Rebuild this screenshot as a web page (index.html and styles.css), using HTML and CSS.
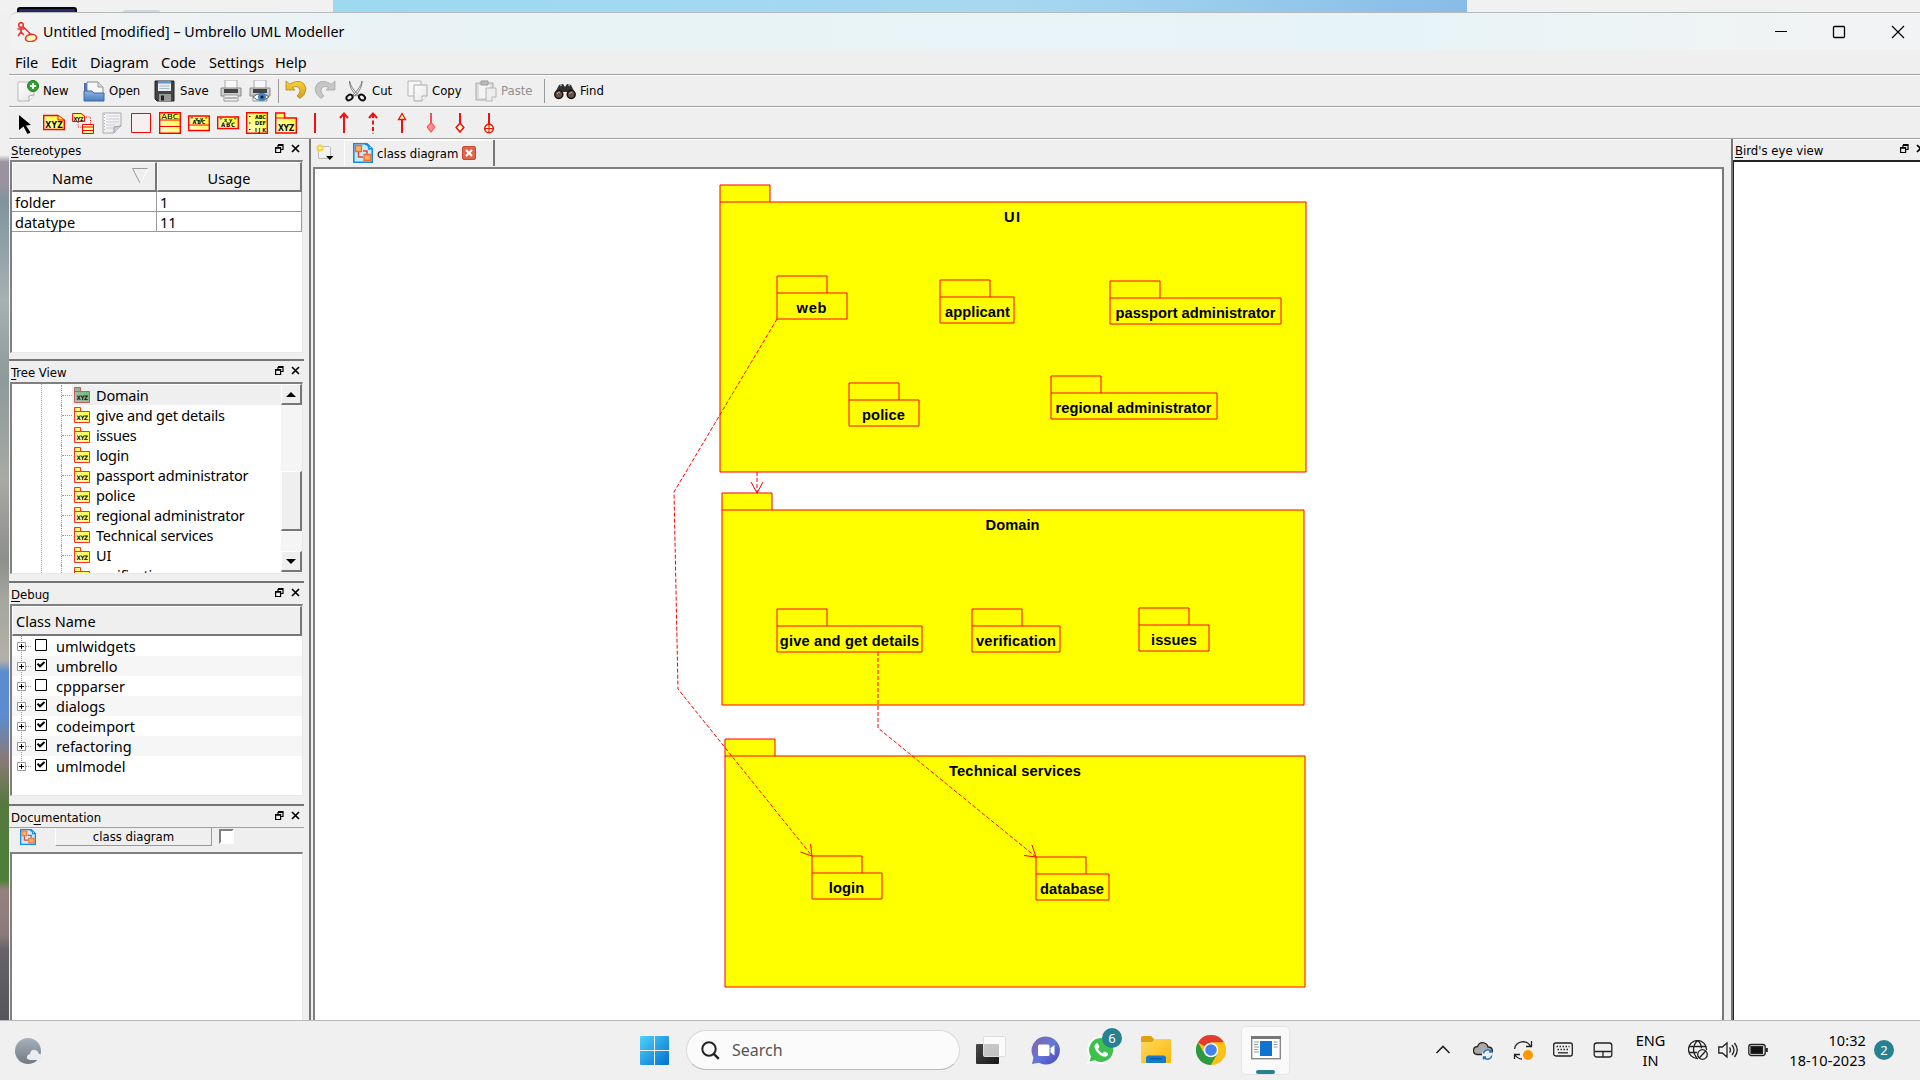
FILE: index.html
```html
<!DOCTYPE html>
<html lang="en">
<head>
<meta charset="utf-8">
<title>Umbrello UML Modeller</title>
<link rel="stylesheet" href="styles.css">
</head>
<body>
<svg width="0" height="0" class="defs" aria-hidden="true">
  <defs>
    <linearGradient id="yel" x1="0" y1="1" x2="1" y2="0"><stop offset="0" stop-color="#ffffe0"/><stop offset="1" stop-color="#ffff10"/></linearGradient>
    <linearGradient id="sel" x1="0" y1="1" x2="1" y2="0"><stop offset="0" stop-color="#a8c4bc"/><stop offset="1" stop-color="#6fb06a"/></linearGradient>
    <linearGradient id="page" x1="0" y1="0" x2="1" y2="1"><stop offset="0" stop-color="#fff"/><stop offset="1" stop-color="#e4e4e4"/></linearGradient>
    <linearGradient id="fold" x1="0" y1="0" x2="0" y2="1"><stop offset="0" stop-color="#8fb4e4"/><stop offset="1" stop-color="#4a7dbd"/></linearGradient>
    <linearGradient id="gold" x1="0" y1="0" x2="0" y2="1"><stop offset="0" stop-color="#f7d43c"/><stop offset="1" stop-color="#d99a1c"/></linearGradient>
    <linearGradient id="win" x1="0" y1="0" x2="1" y2="1"><stop offset="0" stop-color="#4fd2fb"/><stop offset="1" stop-color="#0070d0"/></linearGradient>
    <linearGradient id="chat" x1="0" y1="0" x2="1" y2="1"><stop offset="0" stop-color="#8660a8"/><stop offset=".5" stop-color="#6478d8"/><stop offset="1" stop-color="#4a45b8"/></linearGradient>
    <linearGradient id="fy" x1="0" y1="0" x2="1" y2="1"><stop offset="0" stop-color="#ffd95e"/><stop offset="1" stop-color="#fbb80a"/></linearGradient>
    <linearGradient id="moon" x1="0" y1="0" x2="0" y2="1"><stop offset="0" stop-color="#a5b1bd"/><stop offset="1" stop-color="#737b82"/></linearGradient>
    <linearGradient id="blk" x1="0" y1="0" x2="1" y2="1"><stop offset="0" stop-color="#4a4a4a"/><stop offset="1" stop-color="#161616"/></linearGradient>
    <symbol id="float" viewBox="0 0 9 9"><path d="M3 .5h5v5H6M3 1.5h5M3 1v2" fill="none" stroke="#000" stroke-width="1.2"/><path d="M.6 3.5h5v5h-5zM.6 4.2h5" fill="none" stroke="#000" stroke-width="1.2"/></symbol>
    <symbol id="close" viewBox="0 0 9 9"><path d="M1 1l7 7M8 1L1 8" stroke="#000" stroke-width="1.7"/></symbol>
    <symbol id="pkg" viewBox="0 0 16 16"><path d="M.5 15.500V.5h6v4h9v11z" fill="url(#yel)" stroke="#ff3020"/><path d="M.5 4.500h6" stroke="#ff3020"/><text x="8.200" y="13" text-anchor="middle" class="t6" textLength="11.500">XYZ</text></symbol>
    <symbol id="pkgsel" viewBox="0 0 16 16"><path d="M.5 15.500V.5h6v4h9v11z" fill="url(#sel)" stroke="#cc5a62"/><path d="M.5 4.500h6" stroke="#cc5a62"/><text x="8.200" y="13" text-anchor="middle" class="t6" textLength="11.500">XYZ</text></symbol>
    <symbol id="diag" viewBox="0 0 20 20"><path d="M.8.8H14l5.200 5v13.400H.8z" fill="#c5edff" stroke="#108ce8" stroke-width="1.600"/><path d="M12 1q4 1 4 5l3-.5" fill="#fff" stroke="#108ce8" stroke-width="1.500"/><path d="M2.500 2.500h6v6h-6zM11 11.500h6.500v6H11z" fill="#ffb060" stroke="#f56b30" stroke-width="1.300"/><path d="M5.500 9v5H10M14 11V8h-4" fill="none" stroke="#e0463a" stroke-width="1.500"/></symbol>
    <symbol id="plus" viewBox="0 0 14 9"><path d="M.5.5h8v8h-8z" fill="#fff" stroke="#999"/><path d="M2 4.500h5M4.500 2v5" stroke="#000"/><path d="M9 4.500h5" stroke="#999" stroke-dasharray="1 1"/></symbol>
    <symbol id="off" viewBox="0 0 12 12"><path d="M.5.5h11v11H.5z" fill="#fff" stroke="#000"/></symbol>
    <symbol id="on" viewBox="0 0 12 12"><path d="M.5.5h11v11H.5z" fill="#fff" stroke="#000"/><path d="M2.500 4.800l2.500 2.500L9.500 3" fill="none" stroke="#000" stroke-width="2"/></symbol>
  </defs>
</svg>

<div class="desktop">
  <div class="wall"><i class="chip"></i><i class="pill"></i><i class="sky"></i></div>
  <div class="window">
    <header class="titlebar">
      <svg width="20" height="20" viewBox="0 0 20 20" fill="none" stroke="#f03030" stroke-width="1.600"><circle cx="4" cy="3" r="2.300"/><path d="M4 5.500v4.500M.5 7h7M4 10l-3 4M4 10l3 3M6 4.500l8 8"/><ellipse cx="14" cy="16" rx="5.500" ry="3.600" fill="#ffffb8" transform="rotate(-8 14 16)"/></svg>
      <span class="title">Untitled [modified] – Umbrello UML Modeller</span>
      <svg class="winbtns" width="124" height="14" viewBox="0 0 124 14" fill="none" stroke="#000"><path d="M0 6.500h12" stroke-width="1.200"/><rect x="58.500" y="1.500" width="11" height="11" rx="1" stroke-width="1.300"/><path d="M117 1l12 12M129 1l-12 12" stroke-width="1.200"/></svg>
    </header>
    <nav class="menu"><span>File</span><span>Edit</span><span>Diagram</span><span>Code</span><span>Settings</span><span>Help</span></nav>

    <div class="bar main-bar">
      <svg viewBox="0 0 22 22"><path d="M1 2h16v13l-5 6H1z" fill="url(#page)" stroke="#b8b8b8"/><path d="M17 15l-5 1v5" fill="#fff" stroke="#aaa"/><circle cx="16" cy="6" r="5.500" fill="#2da52d" stroke="#178017"/><path d="M16 3v6M13 6h6" stroke="#fff" stroke-width="2"/></svg><span>New</span>
      <svg viewBox="0 0 22 22"><path d="M1 3h6v10H1z" fill="#4474b8"/><path d="M4 14V2h11l5 5v7z" fill="#f8f8f8" stroke="#888"/><path d="M15 2v5h5" fill="#ddd" stroke="#999"/><path d="M1 11h8l2 2h10v8H1z" fill="url(#fold)" stroke="#396aa8"/></svg><span>Open</span>
      <svg viewBox="0 0 22 22"><path d="M1 1h19v20H3l-2-2z" fill="#444" stroke="#222"/><path d="M4 1h13v10H4z" fill="#e8f0f6"/><path d="M4 1h13v2.500H4z" fill="#5d95cc"/><path d="M5.500 6h10M5.500 8.500h10" stroke="#a8b8c4"/><path d="M5 14h12v7H5z" fill="#999"/><path d="M7 15.500h3v5H7z" fill="#222"/></svg><span>Save</span>
      <svg viewBox="0 0 22 22"><path d="M5 0h12v9H5z" fill="#f7f7f7" stroke="#aaa"/><path d="M1 8h20v8H1z" fill="#ccc" stroke="#888"/><path d="M4 9h14v4H4z" fill="#444"/><path d="M4 15h14v6H4z" fill="#f2f2f2" stroke="#999"/><path d="M5 18h12" stroke="#777"/></svg>
      <svg viewBox="0 0 22 22"><path d="M5 0h12v9H5z" fill="#f7f7f7" stroke="#aaa"/><path d="M1 8h20v8H1z" fill="#ccc" stroke="#888"/><path d="M4 9h14v4H4z" fill="#444"/><path d="M4 15h14v6H4z" fill="#f2f2f2" stroke="#999"/><path d="M4 17q8-7 16 0-8 7-16 0z" fill="#fff" stroke="#666"/><circle cx="13" cy="17" r="4" fill="#3a86cc"/><circle cx="13" cy="17" r="1.500" fill="#012"/></svg>
      <i class="sep"></i>
      <svg viewBox="0 0 22 22"><path d="M1 1v9h9L7 7.500q7-3 8 3 0 3-3 5.500l3 2.500q6-4 6-10Q18-3 4.500 4z" fill="url(#gold)" stroke="#b88314" stroke-width=".8"/></svg>
      <svg viewBox="0 0 22 22"><path d="M21 1v9h-9l3-2.500q-7-3-8 3 0 3 3 5.500l-3 2.500q-6-4-6-10Q4-3 17.500 4z" fill="#c6c6c6" stroke="#aaa" stroke-width=".8"/></svg>
      <svg viewBox="0 0 22 22"><path d="M4.500 1q1 6 9 14l-2 1Q4 8 4.500 1zM17 1q-1 6-9 14l2 1Q17.500 8 17 1z" fill="#eee" stroke="#777" stroke-width=".9"/><g fill="none" stroke="#111" stroke-width="2"><ellipse cx="4.500" cy="17.500" rx="3.300" ry="2.500" transform="rotate(-35 4.500 17.500)"/><ellipse cx="17" cy="17.500" rx="3.300" ry="2.500" transform="rotate(40 17 17.500)"/></g></svg><span>Cut</span>
      <svg viewBox="0 0 22 22"><path d="M1 1h13v15H1z" fill="#f6f6f6" stroke="#b4b4b4"/><path d="M7 5h13v11l-5 5H7z" fill="url(#page)" stroke="#aaa"/><path d="M20 16h-5v5" fill="#fff" stroke="#aaa"/></svg><span>Copy</span>
      <svg viewBox="0 0 22 22"><path d="M1 3h17v17H1z" fill="#ddd" stroke="#aaa"/><path d="M4 5h11v13H4z" fill="#f4f4f4"/><path d="M6 1h7v4H6z" fill="#bbb" stroke="#999"/><path d="M11 8h10v9l-4 4h-6z" fill="#eee" stroke="#b4b4b4"/><path d="M21 17h-4v4" fill="#fff" stroke="#b4b4b4"/></svg><span class="dim">Paste</span>
      <i class="sep"></i>
      <svg viewBox="0 0 22 22"><path d="M5 5l4-1 2 3 2-3 4 1 4 8v4q-3 3-7 0l-1-5h-4l-1 5q-4 3-7 0v-4z" fill="#303030"/><circle cx="4.800" cy="14.500" r="4" fill="#6a5140" stroke="#111" stroke-width="1.500"/><circle cx="17.200" cy="14.500" r="4" fill="#6a5140" stroke="#111" stroke-width="1.500"/><path d="M3 14q1-2 3-2M15.500 14q1-2 3-2M6 6l2-1M14 5l2 1" stroke="#bbb" fill="none"/></svg><span>Find</span>
    </div>

    <div class="bar tool-bar">
      <svg viewBox="0 0 22 22"><path d="M5 3l12 10-5 .5 4.500 7-3 1.500-4-7.500L5 18z" fill="#000"/></svg>
      <svg viewBox="0 0 22 22"><path d="M.7 17.500v-14H15l6.300 4.500v9.500z" fill="url(#yel)" stroke="red" stroke-width="1.400"/><path d="M15 3.500v4.500h6" fill="#ffff40" stroke="red"/><text x="11" y="16" text-anchor="middle" class="t8" textLength="17.500">XYZ</text></svg>
      <svg viewBox="0 0 22 22"><path d="M.6 9.500v-8H9l3.500 2.500v5.500z" fill="url(#yel)" stroke="red"/><text x="6.500" y="8.500" text-anchor="middle" class="t5" textLength="10">XYZ</text><path d="M14 5h4.500v7M6 10v5h5" fill="none" stroke="red" stroke-dasharray="1 1.500"/><path d="M10.500 12.500h11v9h-11zM10.500 15h11M10.500 18.500h11" fill="#ffffa0" stroke="red"/></svg>
      <svg viewBox="0 0 22 22"><path d="M2 1h18v13l-7 7H2z" fill="url(#page)" stroke="#aaa"/><path d="M20 14l-7 1v6" fill="#ccd" stroke="#999"/><path d="M5 4h13M5 7h13M5 10h13M5 13h9M5 16h7" stroke="#ccc8d8"/><path d="M3.500 2v18" stroke="#aaa" stroke-dasharray="1 2"/></svg>
      <svg viewBox="0 0 22 22"><path d="M1.500 1.500h19v19h-19z" fill="#f8f0f0" stroke="red"/></svg>
      <svg viewBox="0 0 22 22"><path d="M.7.700h20.600v20.600H.7z" fill="url(#yel)" stroke="red" stroke-width="1.400"/><path d="M1 8h20M1 14.500h20" stroke="red"/><text x="11" y="7" text-anchor="middle" class="t7n" textLength="17.500" lengthAdjust="spacingAndGlyphs">ABC</text></svg>
      <svg viewBox="0 0 22 22"><path d="M.7 4h20.600v14.500H.7z" fill="url(#yel)" stroke="red" stroke-width="1.400"/><path d="M1 13h20" stroke="red"/><text x="11" y="8.500" text-anchor="middle" class="t5" textLength="17">"xy"</text><text x="11" y="11.500" text-anchor="middle" class="t5" textLength="13">ABC</text></svg>
      <svg viewBox="0 0 22 22"><path d="M.7 5h20.600v11.500H.7z" fill="url(#yel)" stroke="red" stroke-width="1.400"/><text x="11" y="9.500" text-anchor="middle" class="t5" textLength="17">"xy"</text><text x="11" y="15" text-anchor="middle" class="t6" textLength="14">ABC</text></svg>
      <svg viewBox="0 0 22 22"><path d="M.7.700h20.600v20.600H.7z" fill="url(#yel)" stroke="red" stroke-width="1.400"/><path d="M3 4.500h1.500M3 11h1.500M3 17.500h1.500" stroke="#000"/><text x="9" y="6.500" class="t5" textLength="11">ABC</text><text x="9" y="13.300" class="t5" textLength="11">DEF</text><text x="9" y="20" class="t5" textLength="11">IJK</text></svg>
      <svg viewBox="0 0 22 22"><path d="M.7 21V1H9.500v5H21.300v15z" fill="url(#yel)" stroke="red" stroke-width="1.400"/><path d="M1 6h9" stroke="red"/><text x="11.200" y="18.800" text-anchor="middle" class="t8" textLength="16.500">XYZ</text></svg>
      <svg viewBox="0 0 22 22" class="ln"><path d="M11 1v20"/></svg>
      <svg viewBox="0 0 22 22" class="ln"><path d="M11 1v20M7 6l4-4.500L15 6"/></svg>
      <svg viewBox="0 0 22 22" class="ln"><path d="M11 2v20" stroke-dasharray="4 2.500"/><path d="M7 6l4-4.500L15 6"/></svg>
      <svg viewBox="0 0 22 22" class="ln"><path d="M11 7v14"/><path d="M11 1.500L7.500 7.500h7z" fill="#ffffb0" stroke-width="1.300"/></svg>
      <svg viewBox="0 0 22 22" class="ln"><path d="M11 1v10" stroke-width="1.400"/><path d="M11 10.500l3.800 4.500-3.800 5-3.800-5z" fill="#ff9090" stroke="#f55" stroke-width="1.200"/></svg>
      <svg viewBox="0 0 22 22" class="ln"><path d="M11 1v10"/><path d="M11 11l3.800 4.500-3.800 4.500-3.800-4.500z" fill="#ffffd0" stroke-width="1.500"/></svg>
      <svg viewBox="0 0 22 22" class="ln"><path d="M11 1v12"/><circle cx="11" cy="16.500" r="4.300" fill="#ffffb0" stroke-width="1.500"/><path d="M11 12v9M6.500 16.500h9" stroke-width="1.100"/></svg>
    </div>

    <main class="work">
      <aside class="left">
        <section class="dock d1">
          <div class="dt"><span><u>S</u>tereotypes</span><svg><use href="#float"/></svg><svg><use href="#close"/></svg></div>
          <div class="frame stereo">
            <div class="hd"><span>Name</span><svg width="17" height="16" viewBox="0 0 17 16" fill="none"><path d="M16 .5H.5L8 15" stroke="#999"/><path d="M16 .5L8.500 15" stroke="#fff"/></svg></div><div class="hd"><span>Usage</span></div>
            <div class="cell">folder</div><div class="cell">1</div>
            <div class="cell">datatype</div><div class="cell">11</div>
          </div>
        </section>
        <section class="dock d2">
          <div class="dt"><span><u>T</u>ree View</span><svg><use href="#float"/></svg><svg><use href="#close"/></svg></div>
          <div class="frame tree">
            <ul>
              <li class="on"><i></i><svg><use href="#pkgsel"/></svg><span>Domain</span></li>
              <li><i></i><svg><use href="#pkg"/></svg><span>give and get details</span></li>
              <li><i></i><svg><use href="#pkg"/></svg><span>issues</span></li>
              <li><i></i><svg><use href="#pkg"/></svg><span>login</span></li>
              <li><i></i><svg><use href="#pkg"/></svg><span>passport administrator</span></li>
              <li><i></i><svg><use href="#pkg"/></svg><span>police</span></li>
              <li><i></i><svg><use href="#pkg"/></svg><span>regional administrator</span></li>
              <li><i></i><svg><use href="#pkg"/></svg><span>Technical services</span></li>
              <li><i></i><svg><use href="#pkg"/></svg><span>UI</span></li>
              <li><i></i><svg><use href="#pkg"/></svg><span>verification</span></li>
            </ul>
            <div class="scroll"><b><svg width="10" height="5"><path d="M0 5L5 0l5 5z"/></svg></b><b class="thumb"></b><b><svg width="10" height="5"><path d="M0 0l5 5 5-5z"/></svg></b></div>
          </div>
        </section>
        <section class="dock d3">
          <div class="dt"><span><u>D</u>ebug</span><svg><use href="#float"/></svg><svg><use href="#close"/></svg></div>
          <div class="frame debug">
            <div class="hd">Class Name</div>
            <ul>
              <li><svg class="p"><use href="#plus"/></svg><svg class="c"><use href="#off"/></svg>umlwidgets</li>
              <li><svg class="p"><use href="#plus"/></svg><svg class="c"><use href="#on"/></svg>umbrello</li>
              <li><svg class="p"><use href="#plus"/></svg><svg class="c"><use href="#off"/></svg>cppparser</li>
              <li><svg class="p"><use href="#plus"/></svg><svg class="c"><use href="#on"/></svg>dialogs</li>
              <li><svg class="p"><use href="#plus"/></svg><svg class="c"><use href="#on"/></svg>codeimport</li>
              <li><svg class="p"><use href="#plus"/></svg><svg class="c"><use href="#on"/></svg>refactoring</li>
              <li><svg class="p"><use href="#plus"/></svg><svg class="c"><use href="#on"/></svg>umlmodel</li>
            </ul>
          </div>
        </section>
        <section class="dock d4">
          <div class="dt"><span>Doc<u>u</u>mentation</span><svg><use href="#float"/></svg><svg><use href="#close"/></svg></div>
          <div class="docrow"><svg width="16" height="16"><use href="#diag"/></svg><button>class diagram</button><i></i></div>
          <div class="frame"></div>
        </section>
      </aside>

      <section class="center">
        <div class="tabs">
          <svg width="18" height="17" viewBox="0 0 18 17"><path d="M2.500 2.500h11l1 1v11h-12z" fill="#f4f4f4" stroke="#bbb"/><circle cx="4" cy="4" r="3.500" fill="#f5d040"/><circle cx="4" cy="4" r="1.500" fill="#fff6b0"/><path d="M10 12h7.500l-3.700 4z" fill="#000"/></svg>
          <div class="tab"><svg width="20" height="20"><use href="#diag"/></svg><span>class diagram</span><svg width="14" height="14" viewBox="0 0 14 14"><rect x=".5" y=".5" width="13" height="13" rx="1.500" fill="#e2644a" stroke="#c8492f"/><path d="M4 4l6 6M10 4l-6 6" stroke="#fff" stroke-width="2.200"/></svg></div>
        </div>
        <div class="canvas">
          <svg width="1407" height="851" viewBox="315 169 1407 851">
            <g fill="#ff0" stroke="red">
              <path d="M720 202V185h50v17M720 202h586v270H720z"/>
              <path d="M722 510V493h50v17M722 510h582v195H722z"/>
              <path d="M725 756V739h50v17M725 756h580v231H725z"/>
              <path d="M777 293V276h50v17M777 293h70v26h-70z"/>
              <path d="M940 297V280h50v17M940 297h74v26h-74z"/>
              <path d="M1110 298V281h50v17M1110 298h171v26h-171z"/>
              <path d="M849 400V383h50v17M849 400h70v26h-70z"/>
              <path d="M1051 393V376h50v17M1051 393h166v26h-166z"/>
              <path d="M777 626V609h50v17M777 626h145v26H777z"/>
              <path d="M972 626V609h50v17M972 626h88v26h-88z"/>
              <path d="M1139 625V608h50v17M1139 625h70v26h-70z"/>
              <path d="M812 873V856h50v17M812 873h70v26h-70z"/>
              <path d="M1036 874V857h50v17M1036 874h73v26h-73z"/>
            </g>
            <g fill="none" stroke="red">
              <path stroke-dasharray="4 2" d="M777 319L674 492L678 689L812 856"/>
              <path stroke-dasharray="4 2" d="M878 652V728L1036 857"/>
              <path stroke-dasharray="4 2" d="M757 472V493"/>
              <path d="M751 482l6 11 6-11M800.500 852l11.500 4-1.500-12M1024 855.500l12 1.500-4-12"/>
            </g>
            <g class="names">
              <text x="1012" y="222" textLength="16">UI</text>
              <text x="1012.500" y="530" textLength="54">Domain</text>
              <text x="1015" y="776" textLength="132">Technical services</text>
              <text x="811.500" y="313" textLength="30">web</text>
              <text x="977.500" y="317" textLength="65">applicant</text>
              <text x="1195.500" y="318" textLength="160">passport administrator</text>
              <text x="883.500" y="420" textLength="43">police</text>
              <text x="1133.500" y="413" textLength="156">regional administrator</text>
              <text x="849.500" y="646" textLength="139.500">give and get details</text>
              <text x="1016" y="646" textLength="80">verification</text>
              <text x="1174" y="645" textLength="46">issues</text>
              <text x="846.500" y="893" textLength="35.500">login</text>
              <text x="1072" y="894" textLength="64">database</text>
            </g>
          </svg>
        </div>
      </section>

      <aside class="right">
        <div class="dt"><span><u>B</u>ird's eye view</span><svg><use href="#float"/></svg><svg><use href="#close"/></svg></div>
        <div class="bird"></div>
      </aside>
    </main>
  </div>

  <footer class="taskbar">
    <svg class="weather" width="30" height="28" viewBox="0 0 30 28"><circle cx="13" cy="14" r="13" fill="url(#moon)"/><path d="M15 23q-3.500-.5-3-3.500.5-2.500 3-2.500 1-5 5.500-4 3 1 3.500 4 4-.5 4 3 0 2.500-3 3z" fill="#e9edf1"/></svg>
    <div class="apps">
      <svg width="29" height="29" viewBox="0 0 29 29" fill="url(#win)"><path d="M0 1q0-1 1-1h13v14H0zM15 0h13q1 0 1 1v13H15zM0 15h14v14H1q-1 0-1-1zM15 15h14v13q0 1-1 1H15z"/></svg>
      <div class="search"><svg width="19" height="19" viewBox="0 0 19 19" fill="none" stroke="#222" stroke-width="2"><circle cx="8" cy="8" r="6.700"/><path d="M12.800 12.800l5 5" stroke-width="2.400"/></svg><span>Search</span></div>
      <svg width="30" height="29" viewBox="0 0 30 29"><rect y="8" width="23" height="20" rx="1" fill="url(#blk)"/><rect x="7.500" y=".5" width="22" height="20" rx="1" fill="#fff" fill-opacity=".72" stroke="#ddd"/></svg>
      <svg width="30" height="29" viewBox="0 0 30 29"><path d="M15 .5a14 14 0 1 1-7 26.200L1 28l1.500-6.500A14 14 0 0 1 15 .5z" fill="url(#chat)"/><rect x="7" y="8.500" width="11.500" height="11.500" rx="1.500" fill="#fff"/><path d="M19.500 12l4-3v10.500l-4-3z" fill="#fff"/></svg>
      <div class="wa"><svg width="30" height="30" viewBox="0 0 30 30"><path d="M15 1a14 14 0 1 1-6.500 26.300L1 29l2-7A14 14 0 0 1 15 1z" fill="#fff"/><path d="M15 3a12 12 0 1 1-6 22.300L3.500 26.500 5 21.500A12 12 0 0 1 15 3z" fill="#3cc14d"/><path d="M10 8.500q1.500-1 2.500 1l1 2.500-1.500 2q1.500 3 4.500 4.200l2-1.700 3.500 1.700q.5 2.500-2.500 3.500-3.500.5-7.500-3.700-4-4.500-3.500-7 .5-2 1.500-2.500z" fill="#fff"/></svg><b>6</b></div>
      <svg width="30" height="28" viewBox="0 0 30 28"><path d="M0 2q0-2 2-2h8l3 3v6H0z" fill="#e0a012"/><path d="M0 6h11l3-3h14.500q1.500 0 1.500 1.500V27H0z" fill="url(#fy)"/><path d="M5 27v-5q0-2.500 2.500-2.500h15Q25 19.500 25 22v5z" fill="#127bd0"/><path d="M9 22.800h12" stroke="#024a8c"/></svg>
      <svg width="30" height="30" viewBox="0 0 30 30"><circle cx="15" cy="15" r="15" fill="#fbc116"/><path d="M15 15L2 7.500A15 15 0 0 1 28 7.500H15z" fill="#e33b2e"/><path d="M2 7.500A15 15 0 0 0 15 30l6.500-11.200L8.500 18.800z" fill="#2b9a47"/><path d="M15 7.500h13a15 15 0 0 1-13 22.500l6.500-11.200z" fill="#fbc116"/><circle cx="15" cy="15" r="7.300" fill="#fff"/><circle cx="15" cy="15" r="5.800" fill="#4182ee"/></svg>
      <div class="active"><svg width="30" height="24" viewBox="0 0 30 24"><rect x=".7" y=".7" width="28.600" height="22" fill="#fff" stroke="#888" stroke-width="1.400"/><path d="M0 0h30v3H0z" fill="#777"/><path d="M3 6h5M3 8.500h4M3 11h5M3 13.500h4M3 16h5M22.500 6h4M22.500 8.500h4M22.500 11h4" stroke="#999"/><rect x="9" y="5" width="12" height="15" fill="#0f74cf"/></svg><i></i></div>
    </div>
    <div class="tray">
      <svg viewBox="0 0 20 20"><path d="M3.500 13l6.500-6.500 6.500 6.500" stroke-width="1.600"/></svg>
      <svg viewBox="0 0 20 20"><path d="M4 14.500q-3.500-.5-3.500-4t4-4q2-5 7-3.500 3 1 3.500 4 4 0 4.500 3.500v4z" fill="#aaa"/><circle cx="14.500" cy="14.500" r="5.500" fill="#f0f0f0" stroke="none"/><path d="M10.500 13.500a4.200 4.200 0 0 1 7.500-2M18.500 9.500v2.500H16M18.700 15.500a4.200 4.200 0 0 1-7.500 2M10.500 19.500V17H13" stroke="#1a73c8" stroke-width="1.400"/></svg>
      <svg viewBox="0 0 20 20"><path d="M1.500 9a8.700 8.700 0 0 1 16-3M18.500 1v5.500H13M1.500 19v-4.500H7M2 15a9 9 0 0 0 7 4"/><circle cx="15" cy="15" r="5" fill="#ff9800" stroke="none"/></svg>
      <svg viewBox="0 0 20 20"><rect x=".7" y="3" width="18.600" height="13" rx="2"/><path d="M3.500 6.500h13M4.500 9.500h11" stroke-dasharray="1.500 1.500"/><path d="M5 12.800h10"/></svg>
      <svg viewBox="0 0 20 20"><rect x="1.200" y="3" width="17.600" height="14" rx="2.500"/><path d="M1.500 11.500h17M10 11.500V17"/></svg>
      <div class="lang">ENG<br>IN</div>
      <svg viewBox="0 0 20 20"><circle cx="9.500" cy="9.500" r="9"/><path d="M1 6.500h17M1 12.500h9M9.500.5q-4 4-4 9t4 9M9.500.5q4 3 4 8"/><circle cx="14.500" cy="14.500" r="6" fill="#f0f0f0" stroke="none"/><circle cx="14.500" cy="14.500" r="4.800"/><path d="M11.200 18l6.500-7"/></svg>
      <svg viewBox="0 0 20 20"><path d="M.8 7h3.500L9 3v14l-4.700-4H.8zM11.500 7.500q2 2.500 0 5M14 5q4 5 0 10M16.500 3q5.500 7 0 14"/></svg>
      <svg viewBox="0 0 20 20"><rect x=".8" y="4.500" width="16.400" height="11" rx="2.500"/><rect x="3" y="6.700" width="11.500" height="6.600" fill="#111"/><path d="M18.800 8v4" stroke-width="2"/></svg>
      <div class="clock">10:32<br>18-10-2023</div>
      <b class="count">2</b>
    </div>
  </footer>
</div>
</body>
</html>
```
FILE: styles.css
```css
* { box-sizing: border-box; }
body { margin: 0; width: 1920px; height: 1080px; overflow: hidden; font: 14.5px "Noto Sans", "Open Sans", sans-serif; color: #000; }
ul { list-style: none; margin: 0; padding: 0; }
svg { display: block; flex: none; }
.defs { position: absolute; }
.t5, .t6, .t8 { font-family: "DejaVu Sans Condensed", "DejaVu Sans", sans-serif; font-weight: bold; fill: #111; stroke: none; }
.t5 { font-size: 5.5px; } .t6 { font-size: 6.2px; } .t8 { font-size: 8.6px; }
.t7n { font: 7px "DejaVu Sans", sans-serif; }

.desktop { width: 1920px; height: 1080px; display: grid; grid-template: 12px 1008px 60px / 9px 1911px;
  background: linear-gradient(#f0f0f0 0 155px, #98939f 162px 185px, #7f949e 200px, #a7b0b2 300px, #8d9a99 380px, #a8a9a5 480px, #8d8f8d 560px, #a5a79f 600px, #b2afa8 660px, #5b8bd0 672px 715px, #8a7a75 760px, #54793e 805px, #4d8038 880px, #95807e 890px, #8b7a7c 935px, #656367 950px, #55565a 1020px); }
.wall { grid-column: 1 / 3; display: grid; grid-template-columns: 17px 60px 46px 37px 173px 1134px; background: #f1f1f1; }
.chip { grid-column: 2; margin-top: 7px; background: #272865; border: 2px solid #050510; border-bottom: 0; border-radius: 3px 3px 0 0; }
.pill { grid-column: 4; margin-top: 10px; background: #d4d6da; border-radius: 5px 5px 0 0; }
.sky { grid-column: 6; background: linear-gradient(90deg, #9cdaf0, #a8d8f0 60%, #88bce8); }
.window { grid-column: 2; display: grid; grid-template-rows: 37px 24px 32px 32px 1fr; background: #efefef; border-top: 1px solid #b5b9ba; border-radius: 9px 0 0 0; overflow: hidden; height: 1008px; }
.titlebar { display: flex; align-items: center; padding: 0 21px 0 8px; background: linear-gradient(90deg, #f2f2f2 0, #e9f3f6 370px, #e7f4f7 1400px, #f1f3f4 1800px); overflow: hidden; }
.title { margin-left: 6px; font-size: 14.2px; letter-spacing: .04px; white-space: nowrap; }
.winbtns { margin-left: auto; overflow: visible; }
.menu { display: grid; grid-template-columns: 36px 39px 71px 48px 66px 60px; padding-left: 6px; align-items: center; font-size: 14.5px; }
.bar { border-top: 1px solid #a0a0a0; box-shadow: inset 0 1px #fff; display: grid; align-items: center; font: 13px "DejaVu Sans Condensed", "Noto Sans", sans-serif; }
.bar svg { width: 22px; height: 22px; }
.main-bar { padding-left: 8px; grid-template-columns: 26px 40px 26px 45px 26px 40px 29px 29px 7px 29px 31px 27px 35px 25px 43px 26px 43px 10px 26px 60px; }
.sep { height: 24px; border-left: 1px solid #999; }
.dim { color: #909090; }
.tool-bar { padding-left: 5px; grid-template-columns: repeat(17, 29px); grid-auto-rows: 22px; align-content: center; padding-top: 1px; }
.ln { fill: none; stroke: #f01010; stroke-width: 2; }

.work { display: grid; grid-template-columns: 295px 9px 1418px 189px; border-top: 1px solid #a0a0a0; box-shadow: inset 0 1px #fff; min-height: 0; }
.left { display: grid; grid-template-rows: 220px 222px 223px 1fr; }
.dock { display: flex; flex-direction: column; }
.dock + .dock { border-top: 2px solid #757575; }
.dt { height: 21px; flex: none; display: flex; align-items: center; padding: 2px 4px 0 2px; font: 13px "DejaVu Sans Condensed", sans-serif; white-space: nowrap; }
.dt span { margin-right: auto; }
.dt svg { width: 9px; height: 9px; margin: -4px 0 0 7px; }
u { text-underline-offset: 2px; }
.frame { margin-left: 1px; width: 293px; background: #fff; border: 2px solid; border-color: #808080 #e8e8e8 #e8e8e8 #808080; border-right-width: 1px; border-bottom-width: 1px; }
.stereo { height: 193px; display: grid; grid-template-columns: 145px 145px; grid-template-rows: 30px 20px 20px; }
.hd { display: flex; align-items: center; justify-content: center; background: #efefef; border: 1px solid #fff; border-right: 2px solid #777; border-bottom: 2px solid #777; padding-top: 2px; }
.hd svg { align-self: flex-start; margin: 3px 6px 0 0; }
.stereo .hd span { margin: 0 auto; }
.stereo .hd:first-child span { margin: 0 39px 0 auto; }
.cell { padding-left: 3px; border-right: 1px solid #999; border-bottom: 1px solid #999; line-height: 20px; }
.tree { height: 192px; display: flex; overflow: hidden; }
.tree ul { width: 269px; flex: none; padding: 1px 0 0 29px; background: repeating-linear-gradient(#999 0 1px, #fff 1px 2px) 29px 0 / 1px 100% no-repeat; }
.tree li { height: 20px; display: grid; grid-template-columns: 10px 23px 1fr; align-items: center; border-left: 1px dotted #999; margin-left: 20px; line-height: 19px; letter-spacing: -.2px; }
.tree li i { border-top: 1px dotted #999; }
.tree li svg { width: 16px; height: 16px; margin-left: 2px; }
.tree li svg + span { padding-left: 1px; white-space: nowrap; }
.tree .on { background: linear-gradient(#efefef, #efefef) 10px 0 no-repeat; }
.scroll { width: 21px; display: flex; flex-direction: column; background: #f5f5f5; }
.scroll b { height: 21px; flex: none; background: #efefef; border: 1px solid #fff; border-right: 2px solid #777; border-bottom: 2px solid #777; display: grid; place-items: center; }
.scroll .thumb { height: 60px; margin: 66px 0 20px; }
.debug { height: 192px; }
.debug .hd { height: 30px; justify-content: flex-start; padding-left: 3px; padding-top: 1px; }
.debug ul { background: repeating-linear-gradient(#999 0 1px, transparent 1px 2px) 9px 0 / 1px 132px no-repeat; }
.debug li { height: 20px; display: grid; grid-template-columns: 18px 21px 1fr; align-items: center; padding-left: 5px; line-height: 19px; }
.debug li:nth-child(even) { background: rgba(0,0,0,.035); }
.p { width: 14px; height: 9px; }
.c { width: 12px; height: 12px; margin-bottom: 3px; }
.docrow { height: 25px; border-top: 1px solid #a0a0a0; display: grid; grid-template-columns: 35px 157px 7px 16px; padding-left: 11px; }
.docrow svg { margin-top: 1px; }
.docrow button { height: 18px; padding: 0; background: #efefef; border: 1px solid #999; border-width: 0 1px 1px 1px; border-left-color: #fff; font: 13px "DejaVu Sans Condensed", sans-serif; color: #000; }
.docrow i { grid-column: 4; width: 15px; height: 15px; margin-top: 1px; background: #fff; border: 2px solid; border-color: #808080 #fff #fff #808080; }
.d4 .frame { flex: 1; border-bottom: 0; }

.center { grid-column: 3; display: grid; grid-template-rows: 28px 1fr; margin-left: -4px; border-left: 2px solid #757575; }
.tabs { display: grid; grid-template-columns: 28px 151px; padding: 1px 0 0 5px; }
.tabs > svg { margin-top: 4px; }
.tab { height: 26px; display: grid; grid-template-columns: 24px 85px 14px; align-items: center; padding-left: 9px; border-right: 2px solid #777; box-shadow: inset 1px 1px #fff; font: 13px "DejaVu Sans Condensed", sans-serif; white-space: nowrap; }
.canvas { margin-left: 2px; width: 1411px; background: #fff; border: 2px solid; border-color: #808080 #777 #777 #808080; border-bottom: 0; overflow: hidden; }
.names { font: bold 14.67px "Liberation Sans", Arial, sans-serif; text-anchor: middle; }
.right { border-left: 2px solid #757575; box-shadow: inset 1px 0 #fff; }
.right .dt { width: 196px; }
.bird { height: 860px; border-top: 2px solid #222; border-left: 1px solid #222; background: #fff; }

.taskbar { grid-column: 1 / 3; z-index: 1; display: grid; grid-template-columns: 640px 796px 484px; align-items: center; background: #f0f0f0; border-top: 1px solid #b8b8b8; }
.weather { margin-left: 15px; }
.apps { display: grid; grid-template-columns: 46px 290px 55px 55px 55px 55px 45px 49px; align-items: center; height: 58px; margin-bottom: 1px; }
.search { width: 274px; height: 40px; border: 1px solid #d8d8d8; border-bottom-color: #bbb; border-radius: 20px; background: #fbfbfb; display: flex; align-items: center; gap: 12px; padding-left: 14px; color: #555; font-size: 16px; }
.wa { position: relative; }
.wa b, .count { width: 20px; height: 20px; border-radius: 50%; background: #268290; color: #fff; font-size: 13px; font-weight: 400; line-height: 20px; text-align: center; }
.wa b { position: absolute; left: 16px; top: -7px; }
.active { height: 49px; background: #fafafa; border: 1px solid #e4e4e4; border-radius: 5px; display: grid; grid-template-rows: 43px 4px; justify-items: center; align-items: center; }
.active i { width: 19px; height: 4px; border-radius: 2px; background: #268290; }
.tray { display: grid; grid-template-columns: 40px 40px 40px 40px 36px 59px 30px 30px 30px 88px 29px; align-items: center; margin: 0 0 2px -3px; }
.tray svg { width: 20px; height: 20px; fill: none; stroke: #222; stroke-width: 1.3; }
.lang, .clock { font-size: 14.5px; line-height: 20px; text-align: center; }
.lang { width: 43px; }
.clock { text-align: right; letter-spacing: .1px; }
.count { margin-left: 8px; }
```
